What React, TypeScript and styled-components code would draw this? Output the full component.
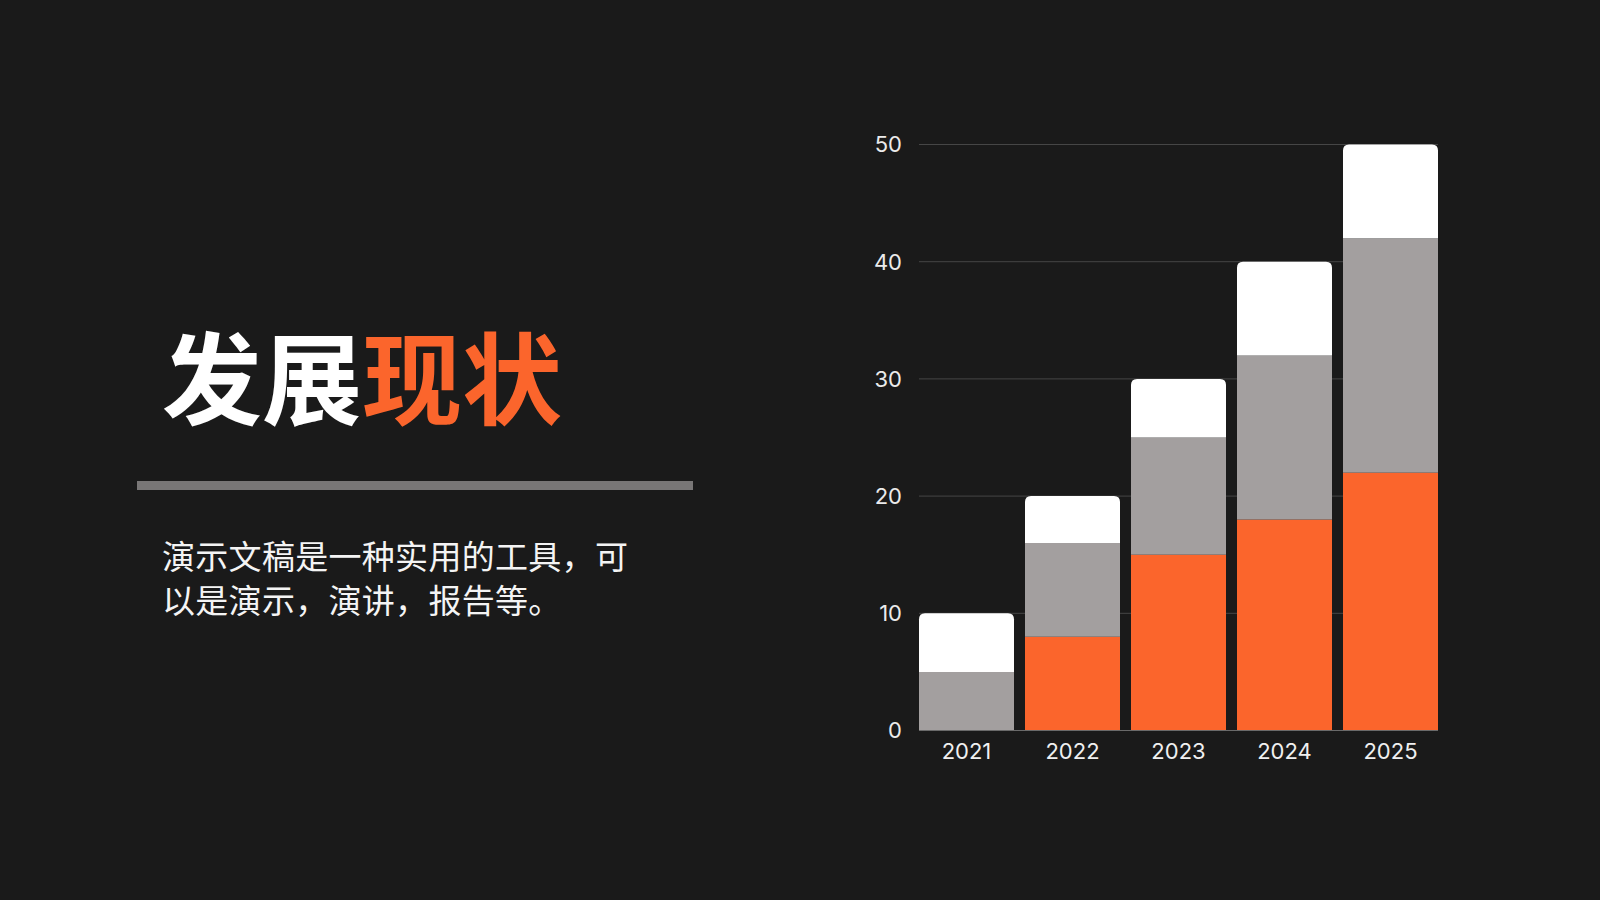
import React from "react";
import styled, { createGlobalStyle } from "styled-components";

const GlobalStyle = createGlobalStyle`
  html, body {
    margin: 0;
    padding: 0;
    background: #1a1a1a;
  }
  * { box-sizing: border-box; }
`;

const Slide = styled.div`
  width: 1600px;
  height: 900px;
  background: #1a1a1a;
  display: flex;
  align-items: flex-start;
  overflow: hidden;
  font-family: "Noto Sans CJK SC", "Noto Sans", sans-serif;
`;

const TextColumn = styled.section`
  margin-left: 137px;
  width: 556px;
  padding-top: 324px;
  display: flex;
  flex-direction: column;
`;

const Title = styled.h1`
  margin: 0;
  padding-left: 25px;
  font-family: "Noto Sans CJK SC", sans-serif;
  font-size: 100px;
  line-height: 100px;
  font-weight: 700;
  color: #ffffff;
  white-space: nowrap;
`;

const Accent = styled.span`
  color: #fb652c;
`;

const Divider = styled.div`
  margin-top: 57px;
  height: 9px;
  width: 100%;
  background: #787676;
`;

const Body = styled.p`
  margin: 43px 0 0 0;
  padding-left: 25px;
  width: 515px;
  font-family: "Noto Sans CJK SC", sans-serif;
  font-size: 33px;
  line-height: 44px;
  letter-spacing: 0.3px;
  font-weight: 400;
  color: #f4f4f4;
`;

const ChartArea = styled.figure`
  margin: 110px 0 0 157px;
  width: 600px;
  height: 670px;
`;

const ChartSvg = styled.svg`
  display: block;
  width: 600px;
  height: 670px;
  font-family: Inter, "Liberation Sans", sans-serif;
`;

type Row = { year: string; orange: number; gray: number; white: number };

const data: Row[] = [
  { year: "2021", orange: 0, gray: 5, white: 5 },
  { year: "2022", orange: 8, gray: 8, white: 4 },
  { year: "2023", orange: 15, gray: 10, white: 5 },
  { year: "2024", orange: 18, gray: 14, white: 8 },
  { year: "2025", orange: 22, gray: 20, white: 8 },
];

const X0 = 69;
const X1 = 588;
const Y0 = 620.5;
const UNIT = 11.72;
const BAR_W = 95;
const STEP = 106;
const R = 6;

const yOf = (v: number) => Y0 - v * UNIT;

function topRounded(x: number, y: number, w: number, h: number, r: number) {
  return `M${x},${y + h} L${x},${y + r} Q${x},${y} ${x + r},${y} L${x + w - r},${y} Q${x + w},${y} ${x + w},${y + r} L${x + w},${y + h} Z`;
}

function Chart() {
  const ticks = [0, 10, 20, 30, 40, 50];
  return (
    <ChartSvg viewBox="0 0 600 670">
      {ticks.slice(1).map((t) => (
        <line
          key={`g${t}`}
          x1={X0}
          x2={X1}
          y1={yOf(t)}
          y2={yOf(t)}
          stroke="#464646"
          strokeWidth={1}
        />
      ))}
      {ticks.map((t) => (
        <text
          key={`t${t}`}
          x={52}
          y={yOf(t) + 7.8}
          textAnchor="end"
          fontSize={22}
          fill="#ebebeb"
        >
          {t}
        </text>
      ))}
      {data.map((d, i) => {
        const x = X0 + i * STEP;
        const oTop = yOf(d.orange);
        const gTop = yOf(d.orange + d.gray);
        const wTop = yOf(d.orange + d.gray + d.white);
        return (
          <g key={d.year}>
            {d.orange > 0 && (
              <rect x={x} y={oTop} width={BAR_W} height={Y0 - oTop} fill="#fb652c" />
            )}
            <rect x={x} y={gTop} width={BAR_W} height={oTop - gTop} fill="#a39f9f" />
            <path d={topRounded(x, wTop, BAR_W, gTop - wTop, R)} fill="#ffffff" />
            <text
              x={x + BAR_W / 2}
              y={649.3}
              textAnchor="middle"
              fontSize={22}
              fill="#f0f0f0"
            >
              {d.year}
            </text>
          </g>
        );
      })}
      <line x1={X0} x2={X1} y1={Y0} y2={Y0} stroke="#6a6a6a" strokeWidth={1} />
    </ChartSvg>
  );
}

export default function App() {
  return (
    <>
      <GlobalStyle />
      <Slide>
        <TextColumn>
          <Title>
            发展<Accent>现状</Accent>
          </Title>
          <Divider />
          <Body>演示文稿是一种实用的工具，可以是演示，演讲，报告等。</Body>
        </TextColumn>
        <ChartArea>
          <Chart />
        </ChartArea>
      </Slide>
    </>
  );
}
